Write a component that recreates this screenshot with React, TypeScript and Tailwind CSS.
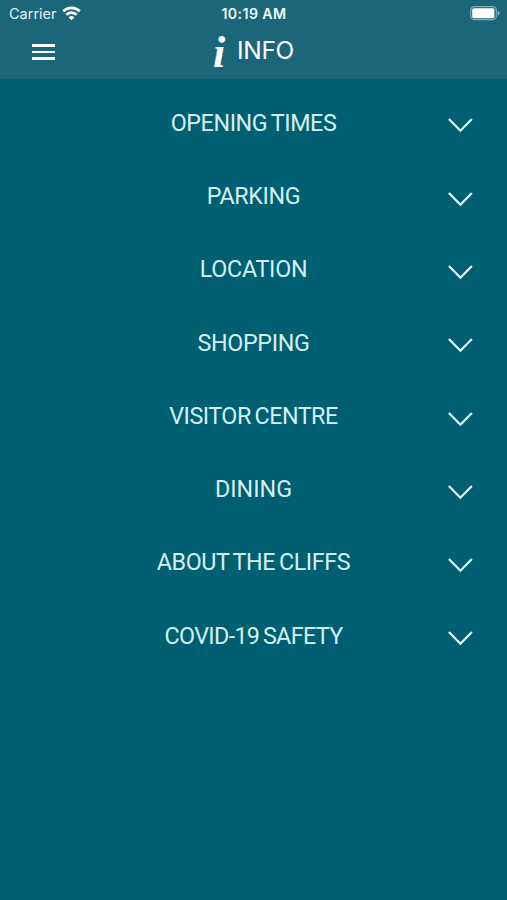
import { useState } from "react";

const sections = [
  { title: "OPENING TIMES", tracking: "tracking-[-0.4px]" },
  { title: "PARKING", tracking: "tracking-[-0.4px]" },
  { title: "LOCATION", tracking: "tracking-[-0.25px]" },
  { title: "SHOPPING", tracking: "tracking-[-0.35px]" },
  { title: "VISITOR CENTRE", tracking: "tracking-[-0.5px]" },
  { title: "DINING", tracking: "tracking-[0px]" },
  { title: "ABOUT THE CLIFFS", tracking: "tracking-[-0.4px]" },
  { title: "COVID-19 SAFETY", tracking: "tracking-[-0.65px]" },
];

function WifiIcon() {
  return (
    <svg width="19" height="15" viewBox="0 0 19 15" fill="none" stroke="white" strokeWidth="2.7">
      <path d="M1.2 5.3a11.8 11.8 0 0 1 16.6 0" />
      <path d="M4.3 8.8a7.4 7.4 0 0 1 10.4 0" />
      <path d="M9.5 14.2 6.7 11.4a4 4 0 0 1 5.6 0z" fill="white" stroke="none" />
    </svg>
  );
}

function BatteryIcon() {
  return (
    <svg width="30" height="15" viewBox="0 0 30 15" fill="none">
      <rect x="0.7" y="0.7" width="25.6" height="13" rx="3.6" stroke="white" strokeOpacity="0.45" strokeWidth="1.2" />
      <rect x="2.2" y="2.2" width="22.2" height="10" rx="1.6" fill="white" />
      <path d="M27.7 5v4.6c1.5-.6 2-1.4 2-2.3s-.5-1.7-2-2.3z" fill="white" fillOpacity="0.5" />
    </svg>
  );
}

export default function App() {
  const [open, setOpen] = useState<string | null>(null);

  return (
    <div className="h-[900px] w-[507px] overflow-hidden bg-[#005f70] font-['Inter',sans-serif] text-white">
      {/* Header */}
      <header className="h-[78.5px] bg-[#1b6779]">
        {/* Status bar */}
        <div className="grid h-[27px] grid-cols-3 items-center pl-[9px] pr-[7px]">
          <div className="flex items-center gap-[5px]">
            <span className="text-[14.5px] tracking-[0px] text-[#e3f2f5]">Carrier</span>
            <WifiIcon />
          </div>
          <span className="-ml-px text-center text-[14.2px] font-semibold tracking-[0.4px] text-[#eef8fa]">10:19 AM</span>
          <div className="flex justify-end">
            <BatteryIcon />
          </div>
        </div>

        {/* Title bar */}
        <div className="grid h-[50px] grid-cols-[1fr_auto_1fr] items-center">
          <button aria-label="Menu" className="ml-8 flex w-[23px] flex-col gap-[4px]">
            <span className="h-[2.5px] w-full bg-white" />
            <span className="h-[2.5px] w-full bg-white" />
            <span className="h-[2.5px] w-full bg-white" />
          </button>
          <h1 className="flex h-[46px] items-center gap-[12px] pb-[4px] text-[24.5px] leading-none tracking-[-0.3px]">
            <span className="pt-[5px] font-['Liberation_Serif',serif] text-[44px] font-bold italic leading-none">i</span>
            INFO
          </h1>
        </div>
      </header>

      {/* Sections */}
      <main className="pt-[8.2px]">
        {sections.map((section) => (
          <button
            key={section.title}
            aria-expanded={open === section.title}
            onClick={() => setOpen(open === section.title ? null : section.title)}
            className="grid h-[73.3px] w-full grid-cols-[60px_1fr_60px] items-center"
          >
            <span className={`col-start-2 text-center font-['Roboto',sans-serif] text-[23.3px] leading-none text-[#d5eff4] [word-spacing:-1.5px] ${section.tracking}`}>
              {section.title}
            </span>
            <svg width="26" height="16" viewBox="0 0 26 16" fill="none" stroke="#e8f8fb" strokeWidth="2.2" className="mt-[4px]">
              <path d="M1.9 2.1 13.4 13.8 24.9 2.1" />
            </svg>
          </button>
        ))}
      </main>
    </div>
  );
}
